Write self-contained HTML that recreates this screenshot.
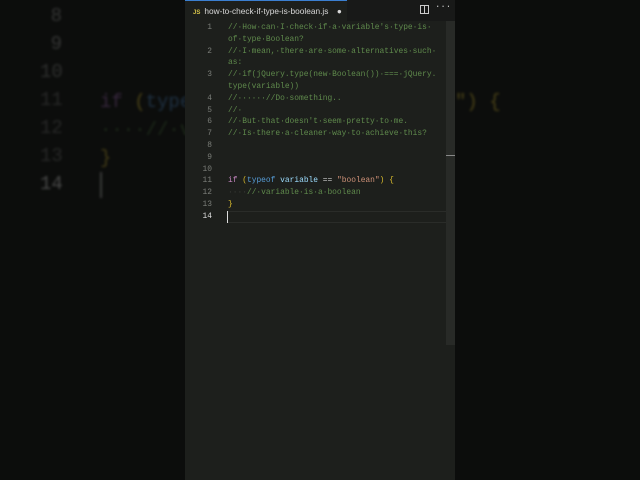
<!DOCTYPE html><html><head><style>
*{margin:0;padding:0;box-sizing:border-box}
body{width:640px;height:480px;background:#0c0d0c;overflow:hidden;position:relative;font-family:"Liberation Mono",monospace}
.bg{position:absolute;left:0;top:0;width:640px;height:480px;filter:blur(1.2px);opacity:.38}
.bl{position:absolute;font-size:19px;white-space:pre;line-height:27.8px}
.panel{position:absolute;left:185px;top:0;width:270px;height:480px;background:#1d1f1c}
.tabbar{position:absolute;left:0;top:0;width:270px;height:21px;background:#181918}
.tab{position:absolute;left:0;top:0;width:162px;height:21px;background:#1d1f1c;border-top:1px solid #3b7fd0;font-family:"Liberation Sans",sans-serif;font-size:8.3px;color:#d8d8d8;line-height:20px;padding-left:8px;white-space:nowrap}
.tab b{color:#d6c34a;font-size:6px;margin-right:4px}
.ln{position:absolute;left:0;width:27px;text-align:right;font-size:7.9px;color:#7a7d78;line-height:11.8px}
.cd{position:absolute;left:43px;font-size:7.9px;color:#5f8a4c;line-height:11.8px;white-space:pre}
.sb{position:absolute;left:261px;top:21px;width:9px;height:324px;background:#282a27}
</style></head><body>
<div class="bg">
<div class="bl" style="left:40px;top:3px;color:#777;text-align:right;width:22px">8</div>
<div class="bl" style="left:40px;top:31px;color:#777;width:22px;text-align:right">9</div>
<div class="bl" style="left:40px;top:59px;color:#666;width:22px;text-align:right">10</div>
<div class="bl" style="left:40px;top:87px;color:#555;width:22px;text-align:right">11</div>
<div class="bl" style="left:40px;top:115px;color:#555;width:22px;text-align:right">12</div>
<div class="bl" style="left:40px;top:143px;color:#555;width:22px;text-align:right">13</div>
<div class="bl" style="left:40px;top:171px;color:#aaa;width:22px;text-align:right">14</div>
<div class="bl" style="left:100px;top:89px;color:#7a4f8a">if <span style="color:#b09a2a">(</span><span style="color:#3d6a9a">type</span></div>
<div class="bl" style="left:100px;top:117px;color:#3a5a30">····//·v</div>
<div class="bl" style="left:100px;top:145px;color:#a08a28">}</div>
<div class="bl" style="left:455px;top:89px;color:#b09a2a">") {</div>
<div style="position:absolute;left:100px;top:172px;width:2px;height:26px;background:#888"></div>
</div>
<div class="panel">
<div class="tabbar"><div class="tab"><b>JS</b>how-to-check-if-type-is-boolean.js <span style="margin-left:6px">●</span></div>
<div style="position:absolute;left:235px;top:5px;width:9px;height:9px;border:1px solid #ccc"></div><div style="position:absolute;left:239px;top:5px;width:1px;height:9px;background:#ccc"></div>
<div style="position:absolute;left:250px;top:2px;color:#ccc;font-size:9px">···</div></div>
<div class="sb"></div>
<div style="position:absolute;left:261px;top:155px;width:9px;height:1px;background:#888"></div>
<div class="ln" style="top:22px">1</div><div class="ln" style="top:45.6px">2</div><div class="ln" style="top:69.2px">3</div><div class="ln" style="top:92.8px">4</div><div class="ln" style="top:104.6px">5</div><div class="ln" style="top:116.4px">6</div><div class="ln" style="top:128.2px">7</div><div class="ln" style="top:140px">8</div><div class="ln" style="top:151.8px">9</div><div class="ln" style="top:163.6px">10</div><div class="ln" style="top:175.4px">11</div><div class="ln" style="top:187.2px">12</div><div class="ln" style="top:199px">13</div><div class="ln" style="top:210.8px;color:#ddd">14</div>
<div class="cd" style="top:22px">//·How·can·I·check·if·a·variable's·type·is·
of·type·Boolean?
//·I·mean,·there·are·some·alternatives·such·
as:
//·if(jQuery.type(new·Boolean())·===·jQuery.
type(variable))
//······//Do·something..
//·
//·But·that·doesn't·seem·pretty·to·me.
//·Is·there·a·cleaner·way·to·achieve·this?</div>
<div class="cd" style="top:175.4px;color:#c586c0">if <span style="color:#d7ba2d">(</span><span style="color:#569cd6">typeof</span> <span style="color:#9cdcfe">variable</span> <span style="color:#ccc">==</span> <span style="color:#ce9178">"boolean"</span><span style="color:#d7ba2d">) {</span></div>
<div class="cd" style="top:187.2px"><span style="color:#3a3d38">····</span>//·variable·is·a·boolean</div>
<div class="cd" style="top:199px;color:#d7ba2d">}</div>
<div style="position:absolute;left:43px;top:211px;width:218px;height:12px;border-top:1px solid #2a2c29;border-bottom:1px solid #2a2c29"></div>
<div style="position:absolute;left:42px;top:211px;width:1px;height:12px;background:#ddd"></div>
</div>
</body></html>
